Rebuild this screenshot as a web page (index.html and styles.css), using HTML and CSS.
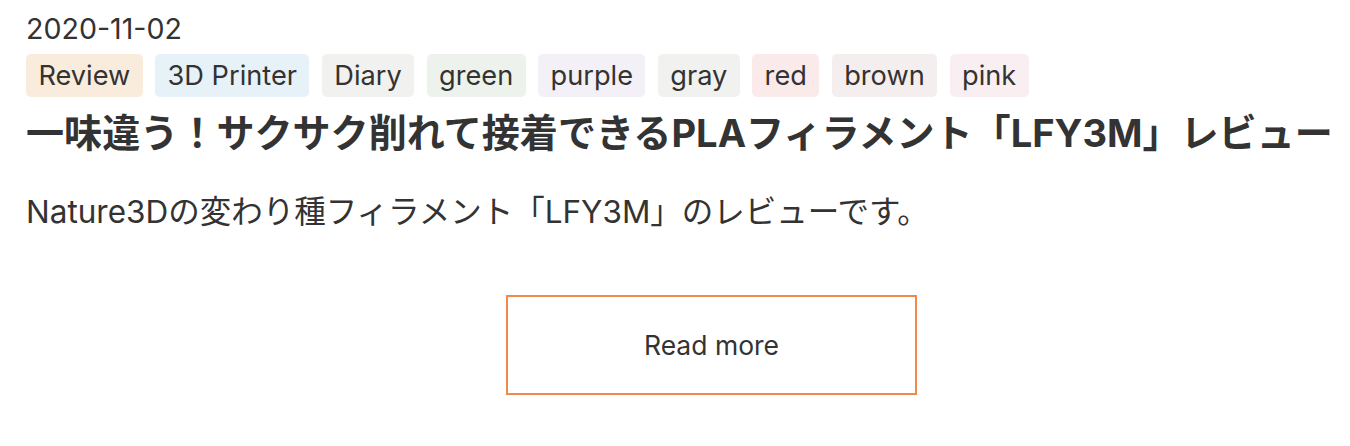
FILE: index.html
```html
<!DOCTYPE html>
<html lang="ja">
<head>
<meta charset="utf-8">
<link rel="stylesheet" href="styles.css">
</head>
<body>
<article class="post">
  <div class="date">2020-11-02</div>
  <ul class="tags">
    <li class="tag orange">Review</li>
    <li class="tag blue">3D Printer</li>
    <li class="tag gray">Diary</li>
    <li class="tag green">green</li>
    <li class="tag purple">purple</li>
    <li class="tag gray">gray</li>
    <li class="tag red">red</li>
    <li class="tag brown">brown</li>
    <li class="tag pink">pink</li>
  </ul>
  <h2 class="title">一味違う！サクサク削れて接着できるPLAフィラメント「LFY3M」レビュー</h2>
  <p class="excerpt">Nature3Dの変わり種フィラメント「LFY3M」のレビューです。</p>
  <div class="actions">
    <a class="more" href="#">Read more</a>
  </div>
</article>
</body>
</html>
```
FILE: styles.css
```css
html, body {
  margin: 0;
  padding: 0;
  background: #fff;
}
body {
  font-family: "Inter", "Noto Sans CJK JP", sans-serif;
  color: #333;
  overflow: hidden;
}
.post {
  padding: 11px 0 0 26px;
}
.date {
  font-size: 28.6px;
  line-height: 36px;
}
.tags {
  list-style: none;
  margin: 7px 0 0 0;
  padding: 0;
  display: flex;
  gap: 12.5px;
}
.tag {
  font-size: 27.2px;
  line-height: 43px;
  height: 43px;
  padding: 0 12.4px;
  border-radius: 5px;
}
.orange { background: #faecdd; }
.blue { background: #e7f2f8; }
.gray { background: #f1f1ef; }
.green { background: #edf3ec; }
.purple { background: #f4f0f7; }
.red { background: #fbeaea; }
.brown { background: #f4eeee; }
.pink { background: #f9eff3; }
.title {
  margin: 12px 0 0 0;
  font-size: 38.1px;
  line-height: 48px;
  font-weight: 700;
  white-space: nowrap;
}
.excerpt {
  margin: 33px 0 0 0;
  font-size: 31.5px;
  line-height: 44px;
}
.actions {
  display: flex;
  padding-left: 480px;
  margin-top: 61px;
}
.more {
  box-sizing: border-box;
  display: flex;
  align-items: center;
  justify-content: center;
  width: 411px;
  height: 100px;
  border: 2px solid #ef8a48;
  color: #333;
  text-decoration: none;
  font-size: 26.5px;
}
```
